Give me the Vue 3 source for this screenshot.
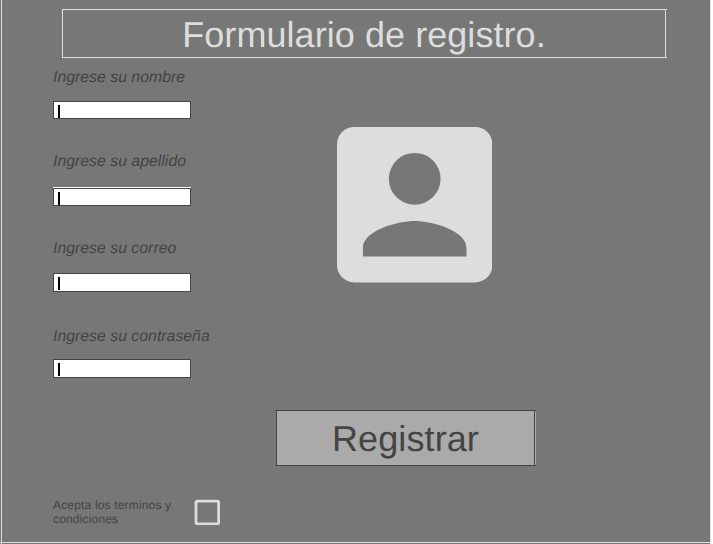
<script setup>
const fields = [
  { id: 'nombre', label: 'Ingrese su nombre' },
  { id: 'apellido', label: 'Ingrese su apellido' },
  { id: 'correo', label: 'Ingrese su correo' },
  { id: 'contrasena', label: 'Ingrese su contraseña' },
]
</script>

<template>
  <main class="page">
    <header class="title"><h1>Formulario de registro.</h1></header>
    <div class="body">
      <form class="fields">
        <div v-for="f in fields" :key="f.id" class="field" :class="f.id">
          <label>{{ f.label }}</label>
          <div class="input"><span class="caret"></span></div>
        </div>
      </form>
      <svg class="avatar" viewBox="3 3 18 18">
        <path fill="#ddd" fill-rule="evenodd" d="M5 3h14a2 2 0 0 1 2 2v14a2 2 0 0 1-2 2H5a2 2 0 0 1-2-2V5a2 2 0 0 1 2-2zm7 3a3 3 0 1 0 0 6 3 3 0 0 0 0-6zm6 12v-1c0-2-4-3.1-6-3.1S6 15 6 17v1z" />
      </svg>
    </div>
    <button class="submit"><span>Registrar</span></button>
    <div class="terms">
      <p>Acepta los terminos y<br />condiciones</p>
      <svg class="check" viewBox="0 0 26 26">
        <rect x="2" y="2.2" width="22.7" height="22.7" rx="1.6" fill="none" stroke="#ddd" stroke-width="2.8" />
      </svg>
    </div>
  </main>
</template>

<style>
body {
  background: #fff;
  overflow: hidden;
}
</style>

<style scoped>
.page {
  box-sizing: border-box;
  width: 711px;
  height: 544px;
  padding-top: 9px;
  background:
    linear-gradient(#ddd, #ddd) 1px 0 / 1px 100% no-repeat,
    linear-gradient(#ddd, #ddd) 710px 0 / 1px 100% no-repeat,
    linear-gradient(#ddd, #ddd) 0 542px / 100% 1px no-repeat,
    #777;
  font-family: "Liberation Sans", Arial, sans-serif;
  color: #444;
  text-rendering: geometricPrecision;
}
.title {
  box-sizing: border-box;
  width: 605px;
  height: 49px;
  margin-left: 62px;
  border: solid #ddd;
  border-width: 1px 0 1px 1px;
  background: linear-gradient(#ddd, #ddd) 602px 0 / 1px 100% no-repeat;
}
h1 {
  margin: 0;
  padding: 4px 2px 0 0;
  text-align: center;
  font-size: 36px;
  line-height: 41px;
  font-weight: 400;
  letter-spacing: 0.06px;
  color: #ddd;
}
.body {
  display: flex;
  height: 352px;
  padding-left: 53px;
}
.fields {
  width: 284px;
}
.field {
  height: 87px;
  padding-top: 11px;
  box-sizing: border-box;
}
label {
  display: block;
  height: 32px;
  font-size: 15.8px;
  line-height: 18px;
  letter-spacing: 0.02px;
  font-style: italic;
}
.input {
  box-sizing: border-box;
  width: 138px;
  height: 18px;
  padding: 3px 0 0 4px;
  border: 1px solid #444;
  background: #fff;
}
.caret {
  display: block;
  width: 2px;
  height: 13px;
  background: #000;
}
.nombre {
  height: 84px;
}
.apellido {
  height: 87px;
}
.apellido label {
  height: 35px;
}
.apellido .input {
  box-shadow: 0 -1px #fff;
}
.correo {
  height: 88px;
}
.correo .input,
.contrasena .input {
  height: 19px;
}
.correo label {
  height: 33px;
}
.contrasena label {
  height: 31px;
}
.avatar {
  width: 155.4px;
  height: 155.4px;
  margin-top: 69.2px;
}
.submit {
  display: block;
  box-sizing: border-box;
  width: 260px;
  height: 56px;
  margin: 0 0 0 276px;
  padding: 2px 2px 0 0;
  border: solid #444;
  border-width: 1px 0 1px 1px;
  border-radius: 0;
  background: linear-gradient(#444, #444) 257px 0 / 1px 100% no-repeat, #aaa;
  font: 36px/52px "Liberation Sans", Arial, sans-serif;
  letter-spacing: 0.1px;
  color: #444;
  text-align: center;
  text-rendering: geometricPrecision;
}
.submit span {
  display: block;
  line-height: 52px;
}
.terms {
  display: flex;
  padding: 32px 0 0 53px;
}
p {
  width: 141px;
  margin: 0;
  font-size: 12px;
  line-height: 14px;
  letter-spacing: 0.17px;
  white-space: nowrap;
}
.check {
  width: 26px;
  height: 26px;
  margin-top: 1px;
}
</style>
